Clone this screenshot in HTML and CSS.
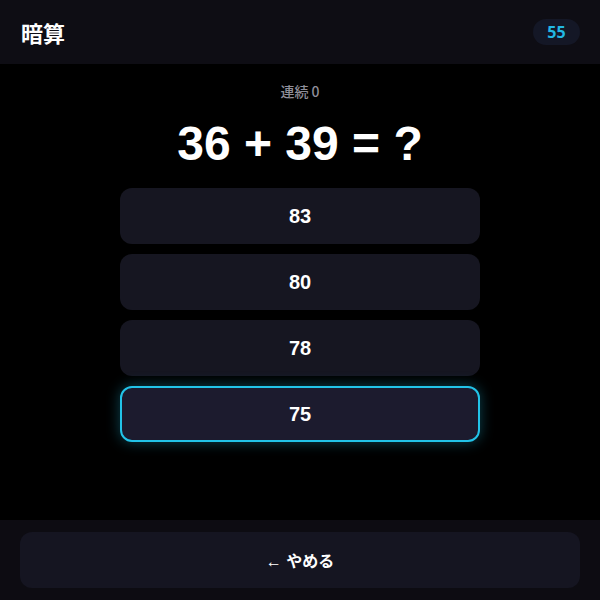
FILE: index.html
```html
<!DOCTYPE html>
<html lang="ja">
<head>
<meta charset="utf-8">
<title>暗算</title>
<link rel="stylesheet" href="styles.css">
</head>
<body>
<div class="app">
  <header class="header">
    <h1 class="title">暗算</h1>
    <div class="score">55</div>
  </header>
  <main class="main">
    <div class="streak">連続 0</div>
    <div class="question">36 + 39 = ?</div>
    <div class="choices">
      <button class="choice">83</button>
      <button class="choice">80</button>
      <button class="choice">78</button>
      <button class="choice selected">75</button>
    </div>
  </main>
  <footer class="footer">
    <button class="quit">← やめる</button>
  </footer>
</div>
</body>
</html>
```
FILE: styles.css
```css
* { box-sizing: border-box; }
html, body { margin: 0; padding: 0; background: #000; }
body {
  font-family: "Liberation Sans", "Noto Sans CJK JP", sans-serif;
  color: #fff;
}
.app {
  width: 600px;
  height: 600px;
  display: flex;
  flex-direction: column;
}
.header {
  height: 64px;
  background: #0e0d14;
  display: flex;
  align-items: center;
  justify-content: space-between;
  padding: 0 20px 0 21px;
}
.title {
  margin: 0;
  font-size: 22px;
  font-weight: 700;
  font-family: "Noto Sans CJK JP", sans-serif;
  line-height: 1;
}
.score {
  height: 26px;
  min-width: 47px;
  padding: 0 12px;
  border-radius: 13px;
  background: #141726;
  color: #22b8e4;
  font-weight: 700;
  font-size: 16px;
  font-family: "Noto Sans", "Liberation Sans", sans-serif;
  display: flex;
  align-items: center;
  justify-content: center;
}
.main {
  flex: 1;
  display: flex;
  flex-direction: column;
  align-items: center;
  padding-top: 17px;
}
.streak {
  font-family: "Noto Sans CJK JP", sans-serif;
  font-size: 14px;
  line-height: 20px;
  font-weight: 500;
  color: #8f8e99;
}
.question {
  margin-top: 14px;
  font-size: 48px;
  font-weight: 700;
  line-height: 58px;
  margin-bottom: 15px;
}
.choices {
  width: 360px;
  display: flex;
  flex-direction: column;
  gap: 10px;
}
.choice {
  height: 56px;
  border: 2px solid transparent;
  border-radius: 12px;
  background: #161621;
  color: #fff;
  font-family: "Liberation Sans", sans-serif;
  font-size: 20px;
  font-weight: 700;
  cursor: pointer;
}
.choice.selected {
  background: #1c1b2e;
  border-color: #22c3e8;
  box-shadow: 0 0 14px rgba(34, 195, 232, 0.35);
}
.footer {
  height: 80px;
  background: #0d0c12;
  padding: 12px 20px;
}
.quit {
  width: 100%;
  height: 56px;
  border: none;
  border-radius: 12px;
  background: #151521;
  color: #fff;
  font-family: "Liberation Sans", "Noto Sans CJK JP", sans-serif;
  font-size: 16px;
  font-weight: 700;
}
```
